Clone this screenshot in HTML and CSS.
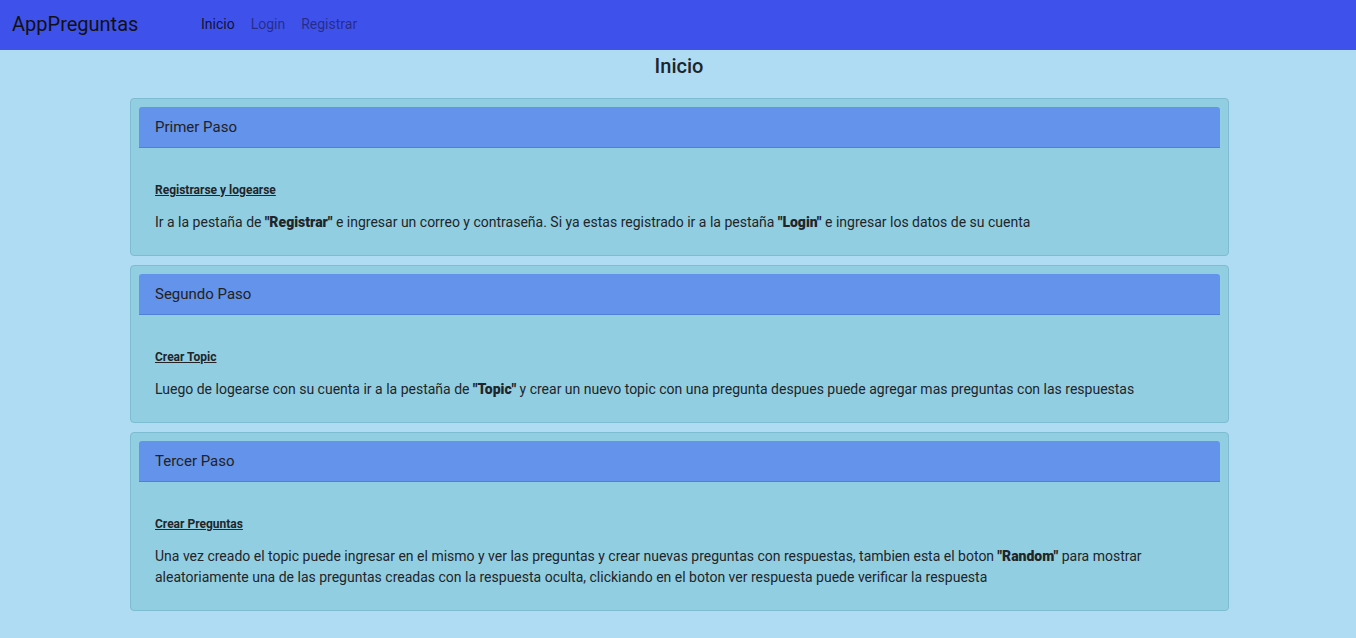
FILE: index.html
```html
<!DOCTYPE html>
<html lang="es">
<head>
<meta charset="utf-8">
<title>AppPreguntas</title>
<link rel="stylesheet" href="styles.css">
</head>
<body>
<nav class="navbar">
  <span class="brand">AppPreguntas</span>
  <ul class="nav">
    <li><a class="nav-link active" href="#">Inicio</a></li>
    <li><a class="nav-link" href="#">Login</a></li>
    <li><a class="nav-link" href="#">Registrar</a></li>
  </ul>
</nav>
<main class="main">
  <h1 class="title">Inicio</h1>
  <div class="cards">
    <section class="card">
      <div class="card-header">Primer Paso</div>
      <div class="card-body">
        <h6 class="step-title">Registrarse y logearse</h6>
        <p class="step-text">Ir a la pestaña de <b>"Registrar"</b> e ingresar un correo y contraseña. Si ya estas registrado ir a la pestaña <b>"Login"</b> e ingresar los datos de su cuenta</p>
      </div>
    </section>
    <section class="card">
      <div class="card-header">Segundo Paso</div>
      <div class="card-body">
        <h6 class="step-title">Crear Topic</h6>
        <p class="step-text">Luego de logearse con su cuenta ir a la pestaña de <b>"Topic"</b> y crear un nuevo topic con una pregunta despues puede agregar mas preguntas con las respuestas</p>
      </div>
    </section>
    <section class="card">
      <div class="card-header">Tercer Paso</div>
      <div class="card-body">
        <h6 class="step-title">Crear Preguntas</h6>
        <p class="step-text">Una vez creado el topic puede ingresar en el mismo y ver las preguntas y crear nuevas preguntas con respuestas, tambien esta el boton <b>"Random"</b> para mostrar aleatoriamente una de las preguntas creadas con la respuesta oculta, clickiando en el boton ver respuesta puede verificar la respuesta</p>
      </div>
    </section>
  </div>
</main>
</body>
</html>
```

FILE: styles.css
```css
* { box-sizing: border-box; }
html, body { margin: 0; padding: 0; }
body {
  font-family: Roboto, "Noto Sans", sans-serif;
  background: #afdcf3;
  color: #212529;
  min-height: 638px;
}
.navbar {
  height: 50px;
  background: #3f51eb;
  display: flex;
  align-items: center;
  padding: 0 12px 2px;
}
.brand {
  font-size: 20px;
  color: #111;
  width: 169px;
  margin-right: 12px;
}
.nav {
  list-style: none;
  margin: 0;
  padding: 0;
  display: flex;
}
.nav-link {
  display: block;
  font-size: 14px;
  text-decoration: none;
  color: rgba(20, 20, 70, 0.6);
  padding: 0 8px;
}
.nav-link.active { color: rgba(10, 10, 30, 0.9); }
.main {
  display: flex;
  flex-direction: column;
  align-items: flex-start;
  padding-left: 130px;
}
.title {
  align-self: stretch;
  text-align: center;
  padding-right: 128px;
  font-size: 20px;
  font-weight: 500;
  margin: 4px 0 20px;
  line-height: 24px;
  color: #212529;
}
.cards {
  width: 1099px;
  display: flex;
  flex-direction: column;
  gap: 9px;
}
.card {
  background: #92cee2;
  border: 1px solid #7ebcd1;
  border-radius: 4px;
  padding: 8px 8px 0;
}
.card-header {
  background: #6493eb;
  border-bottom: 1px solid #4f7fd6;
  border-radius: 3px 3px 0 0;
  height: 41px;
  line-height: 40px;
  padding: 0 16px;
  font-size: 15px;
  color: #222;
}
.card-body {
  padding: 34px 16px 22px;
}
.step-title {
  margin: 0 0 14px;
  font-size: 12px;
  font-weight: 700;
  text-decoration: underline;
  line-height: 16px;
}
.step-text {
  margin: 0;
  font-size: 14px;
  line-height: 21px;
  color: #212529;
}
.step-text b { font-weight: 900; }
```
